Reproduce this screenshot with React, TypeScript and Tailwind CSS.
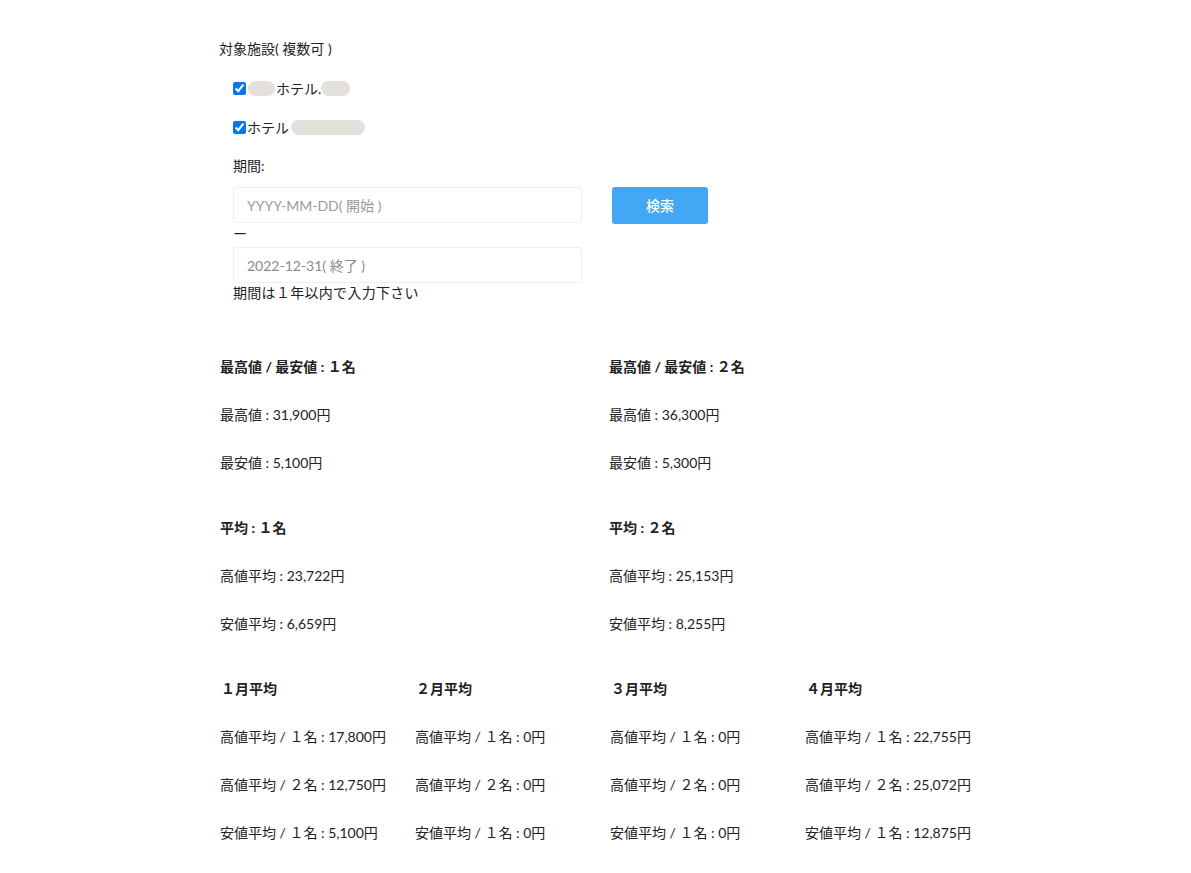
import React from "react";

const font = { fontFamily: 'Lato, "Noto Sans CJK JP", "Noto Sans", sans-serif' };

function Blob({ w }: { w: number }) {
  return <span className="inline-block h-[15px] rounded-full bg-[#e4e0db] align-middle" style={{ width: w }} />;
}

const months = [
  { h: "１月平均", r: ["高値平均 / １名 : 17,800円", "高値平均 / ２名 : 12,750円", "安値平均 / １名 : 5,100円"] },
  { h: "２月平均", r: ["高値平均 / １名 : 0円", "高値平均 / ２名 : 0円", "安値平均 / １名 : 0円"] },
  { h: "３月平均", r: ["高値平均 / １名 : 0円", "高値平均 / ２名 : 0円", "安値平均 / １名 : 0円"] },
  { h: "４月平均", r: ["高値平均 / １名 : 22,755円", "高値平均 / ２名 : 25,072円", "安値平均 / １名 : 12,875円"] },
];

export default function App() {
  return (
    <div className="min-h-[873px] w-full bg-white text-[#222]" style={font}>
      <div className="pl-[219px] pt-[38px]">
        <div className="h-[22px] text-[14px] leading-[22px]">対象施設( 複数可 )</div>
        <div className="pl-[14px]">
          <label className="mt-[17px] flex h-[22px] items-center text-[14px]">
            <input type="checkbox" defaultChecked className="m-0 h-[13px] w-[13px] accent-[#0b74f0]" />
            <span className="ml-[2px] mr-[1px] flex"><Blob w={27} /></span>
            <span>ホテル.</span>
            <Blob w={29} />
          </label>
          <label className="mt-[17px] flex h-[22px] items-center text-[14px]">
            <input type="checkbox" defaultChecked className="m-0 h-[13px] w-[13px] accent-[#0b74f0]" />
            <span className="ml-[1px] mr-[2px]">ホテル</span>
            <Blob w={74} />
          </label>
          <div className="mt-[19px] h-[18px] text-[14px] leading-[18px]">期間:</div>
          <div className="mt-[12px] flex items-start">
            <div className="w-[349px]">
              <input
                readOnly
                placeholder="YYYY-MM-DD( 開始 )"
                className="h-[36px] w-full rounded-[3px] border border-[#eeeeee] px-[13px] text-[14px] text-[#888] placeholder:text-[#9a9a9a] outline-none"
                style={font}
              />
              <div className="h-[24px] text-[14px] leading-[22px]">ー</div>
              <input
                readOnly
                placeholder="2022-12-31( 終了 )"
                className="h-[36px] w-full rounded-[3px] border border-[#eeeeee] px-[13px] text-[14px] placeholder:text-[#8a8a8a] outline-none"
                style={font}
              />
              <div className="h-[20px] text-[14px] leading-[20px] tracking-[0.3px]">期間は１年以内で入力下さい</div>
            </div>
            <button className="ml-[30px] h-[37px] w-[96px] rounded-[3px] bg-[#42a7f5] text-[14px] font-medium text-white">
              検索
            </button>
          </div>
        </div>

        <div className="mt-[54px] grid w-[778px] grid-cols-2 text-[14px] leading-[20px]">
          <div className="flex flex-col gap-[28px] pl-[1px]">
            <div className="h-[20px] font-bold">最高値 / 最安値 : １名</div>
            <div className="h-[20px]">最高値 : 31,900円</div>
            <div className="h-[20px]">最安値 : 5,100円</div>
          </div>
          <div className="flex flex-col gap-[28px] pl-[1px]">
            <div className="h-[20px] font-bold">最高値 / 最安値 : ２名</div>
            <div className="h-[20px]">最高値 : 36,300円</div>
            <div className="h-[20px]">最安値 : 5,300円</div>
          </div>
        </div>

        <div className="mt-[45px] grid w-[778px] grid-cols-2 text-[14px] leading-[20px]">
          <div className="flex flex-col gap-[28px] pl-[1px]">
            <div className="h-[20px] font-bold">平均 : １名</div>
            <div className="h-[20px]">高値平均 : 23,722円</div>
            <div className="h-[20px]">安値平均 : 6,659円</div>
          </div>
          <div className="flex flex-col gap-[28px] pl-[1px]">
            <div className="h-[20px] font-bold">平均 : ２名</div>
            <div className="h-[20px]">高値平均 : 25,153円</div>
            <div className="h-[20px]">安値平均 : 8,255円</div>
          </div>
        </div>

        <div className="mt-[45px] grid w-[780px] grid-cols-4 text-[14px] leading-[20px]">
          {months.map((m) => (
            <div key={m.h} className="flex flex-col gap-[28px] pl-[1px]">
              <div className="h-[20px] pl-[1px] font-bold">{m.h}</div>
              {m.r.map((t) => (
                <div key={t} className="h-[20px]">{t}</div>
              ))}
            </div>
          ))}
        </div>
      </div>
    </div>
  );
}
